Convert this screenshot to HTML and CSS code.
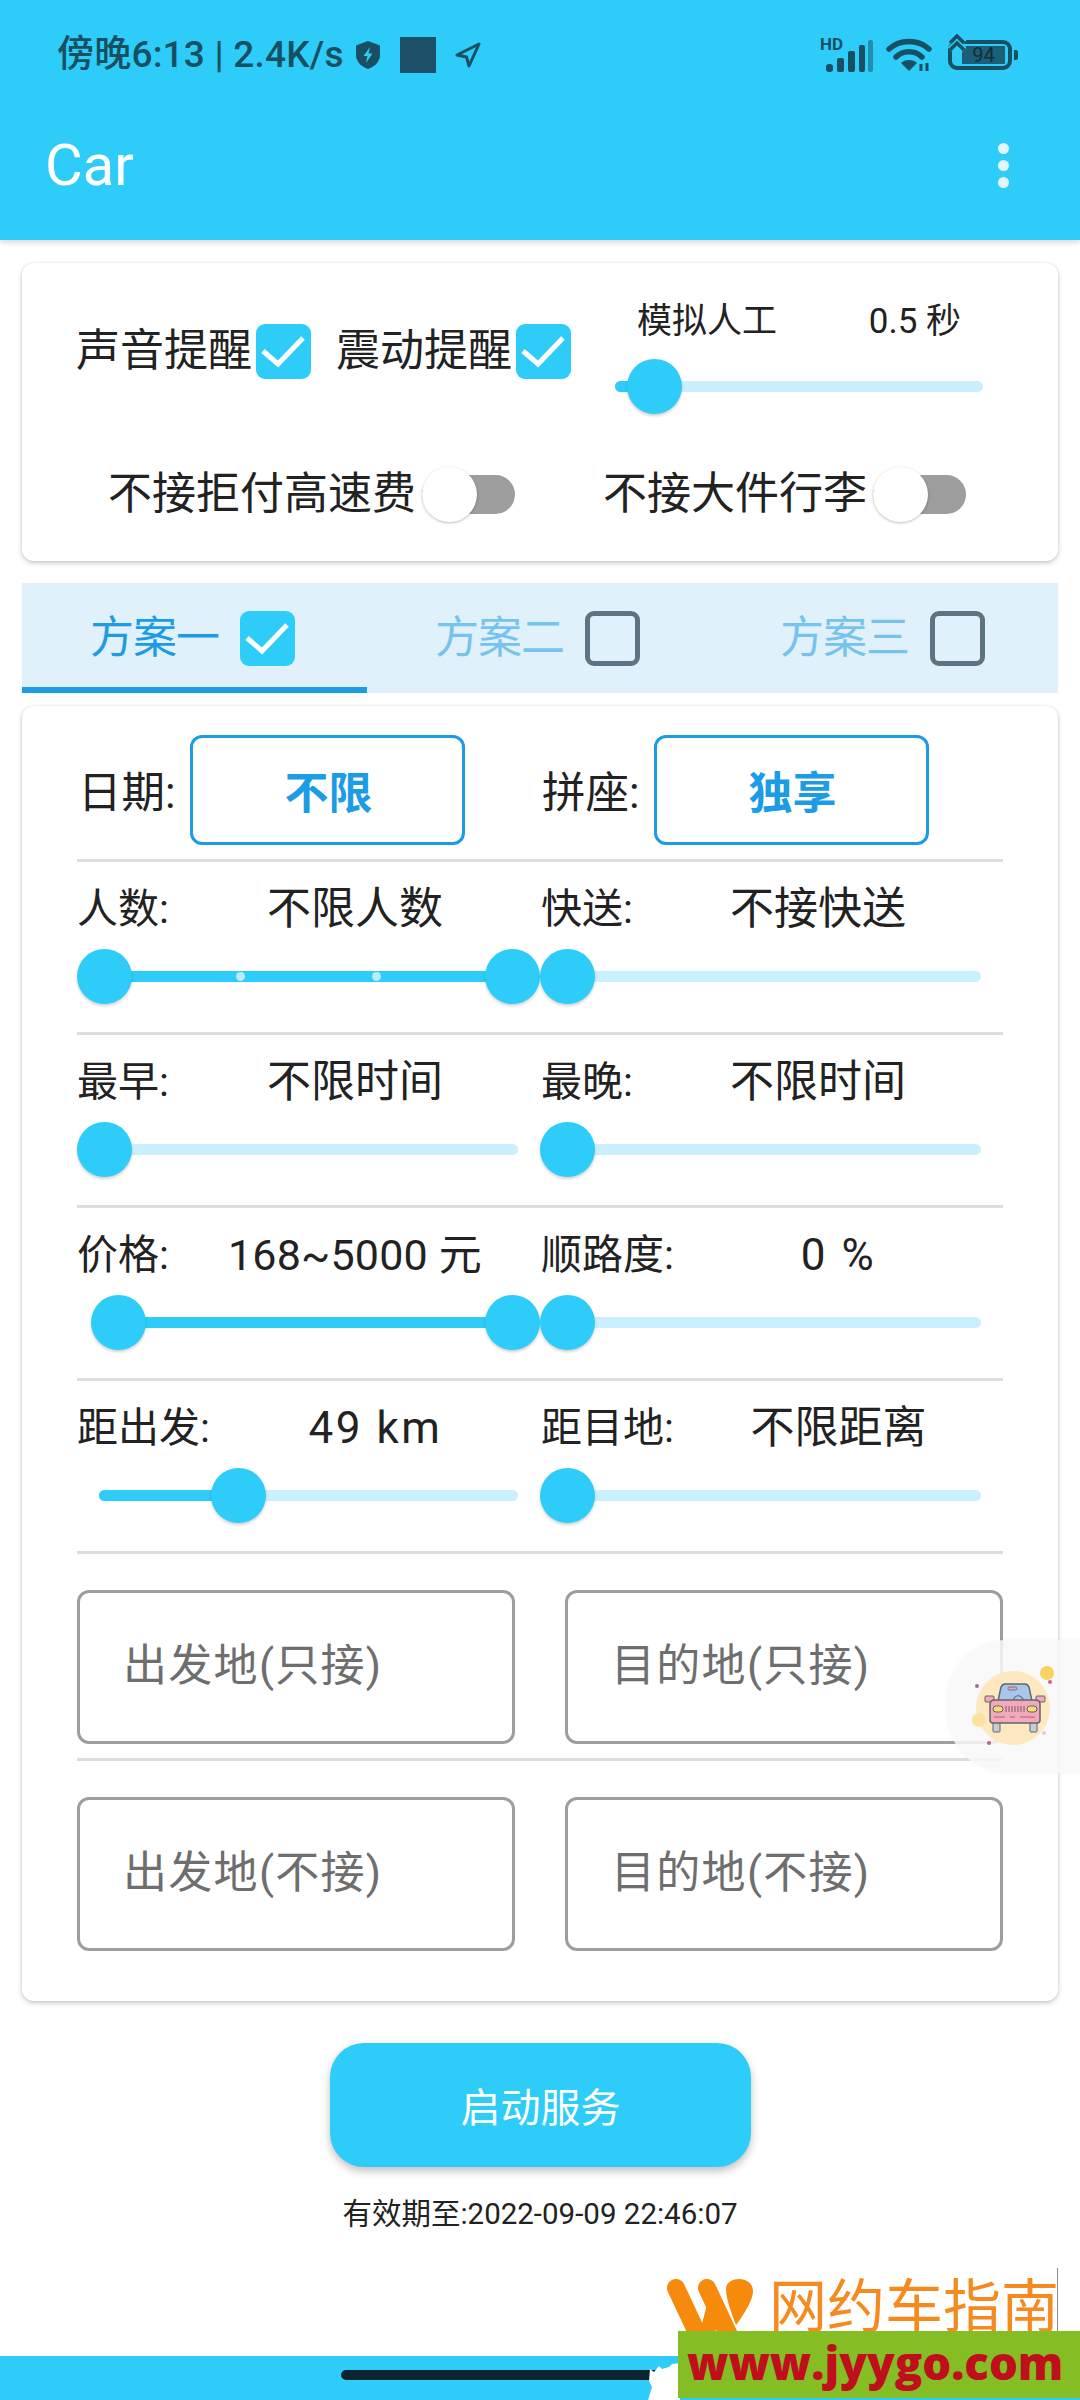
FILE: index.html
```html
<!DOCTYPE html>
<html lang="zh">
<head>
<meta charset="utf-8">
<title>Car</title>
<link rel="stylesheet" href="styles.css">
</head>
<body>
<div class="screen">
  <header class="appbar">
    <div class="status">
      <div class="status-left">
        <span class="status-text">傍晚6:13 | 2.4K/s</span>
        <svg class="ic-shield" viewBox="0 0 26 28"><path d="M13 0 25 4.500V14C25 21 19 26 13 28 7 26 1 21 1 14V4.500Z" fill="#174f63"/><path d="M15 6 8.500 15H12.500L11 22 17.500 12.500H13.500Z" fill="#2ecdf9"/></svg>
        <span class="status-square"></span>
        <svg class="ic-nav" viewBox="0 0 26 26"><path d="M24 2 2 13 11.500 15 14 24Z" fill="none" stroke="#174f63" stroke-width="3" stroke-linejoin="round"/></svg>
      </div>
      <div class="status-right">
        <div class="ic-signal">
          <span class="hd">HD</span>
          <svg viewBox="0 0 48 32" class="bars"><g fill="#174f63"><rect x="1" y="24" width="7" height="8" rx="3"/><rect x="12" y="18" width="7" height="14" rx="2"/><rect x="23" y="11" width="7" height="21" rx="2"/><rect x="34" y="5" width="6" height="27" rx="2"/></g><rect x="43" y="0" width="5" height="32" rx="2" fill="#1f8eaf"/></svg>
        </div>
        <svg class="ic-wifi" viewBox="0 0 46 34"><g fill="none" stroke="#174f63" stroke-linecap="round" stroke-width="5.500"><path d="M3 11C14 1 32 1 43 11"/><path d="M10 19C17 12 29 12 36 19"/></g><path d="M15 25C19 21 27 21 31 25L23 33Z" fill="#174f63"/><path d="M35 26V33M41 25V33" stroke="#174f63" stroke-width="3"/></svg>
        <div class="battery">
          <div class="batt-body"><div class="batt-fill"><span>94</span></div></div>
          <span class="batt-cap"></span>
          <svg class="ic-charge" viewBox="0 0 18 24"><path d="M2 9 9 2 16 9M2 16 9 9 16 16M9 10V24" fill="none" stroke="#2ecdf9" stroke-width="7"/><path d="M2 9 9 2 16 9M2 16 9 9 16 16" fill="none" stroke="#174f63" stroke-width="3.500"/></svg>
        </div>
      </div>
    </div>
    <div class="toolbar">
      <span class="app-title">Car</span>
      <div class="more"><i></i><i></i><i></i></div>
    </div>
  </header>

  <section class="card card-top">
    <div class="top-row">
      <span class="opt">声音提醒</span>
      <span class="check on"><svg viewBox="0 0 55 55"><path d="M7 27 22 40 47 14"/></svg></span>
      <span class="opt opt-second">震动提醒</span>
      <span class="check on"><svg viewBox="0 0 55 55"><path d="M7 27 22 40 47 14"/></svg></span>
      <div class="sim">
        <div class="sim-label"><span>模拟人工</span><span>0.5 秒</span></div>
        <div class="slider sim-slider">
          <div class="track" ><div class="fill" style="width:39px"></div></div>
          <span class="thumb" style="left:12px"></span>
        </div>
      </div>
    </div>
    <div class="switch-row">
      <div class="sw-item sw-a"><span class="opt">不接拒付高速费</span><span class="switch"><i></i></span></div>
      <div class="sw-item sw-b"><span class="opt">不接大件行李</span><span class="switch"><i></i></span></div>
    </div>
  </section>

  <nav class="tabs">
    <div class="tab active"><span class="tab-text">方案一</span><span class="check on"><svg viewBox="0 0 55 55"><path d="M7 27 22 40 47 14"/></svg></span></div>
    <div class="tab"><span class="tab-text">方案二</span><span class="check"></span></div>
    <div class="tab"><span class="tab-text">方案三</span><span class="check"></span></div>
  </nav>

  <section class="card card-main">
    <div class="row date-row">
      <div class="cell date-cell"><span class="date-label">日期:</span><span class="pick">不限</span></div>
      <div class="cell date-cell"><span class="date-label">拼座:</span><span class="pick">独享</span></div>
    </div>

    <div class="row param-row">
      <div class="cell">
        <div class="head"><span class="lab">人数:</span><span class="val">不限人数</span></div>
        <div class="slider">
          <div class="track"><div class="fill full"></div><i class="tick" style="left:141px"></i><i class="tick" style="left:277px"></i></div>
          <span class="thumb" style="left:0"></span><span class="thumb" style="left:408px"></span>
        </div>
      </div>
      <div class="cell">
        <div class="head"><span class="lab">快送:</span><span class="val">不接快送</span></div>
        <div class="slider right"><div class="track"></div><span class="thumb" style="left:0"></span></div>
      </div>
    </div>

    <div class="row param-row">
      <div class="cell">
        <div class="head"><span class="lab">最早:</span><span class="val">不限时间</span></div>
        <div class="slider"><div class="track"></div><span class="thumb" style="left:0"></span></div>
      </div>
      <div class="cell">
        <div class="head"><span class="lab">最晚:</span><span class="val">不限时间</span></div>
        <div class="slider right"><div class="track"></div><span class="thumb" style="left:0"></span></div>
      </div>
    </div>

    <div class="row param-row">
      <div class="cell">
        <div class="head"><span class="lab">价格:</span><span class="val num">168~5000 元</span></div>
        <div class="slider">
          <div class="track"><div class="fill full"></div></div>
          <span class="thumb" style="left:14px"></span><span class="thumb" style="left:408px"></span>
        </div>
      </div>
      <div class="cell">
        <div class="head"><span class="lab">顺路度:</span><span class="val wide">0 %</span></div>
        <div class="slider right"><div class="track"></div><span class="thumb" style="left:0"></span></div>
      </div>
    </div>

    <div class="row param-row">
      <div class="cell">
        <div class="head"><span class="lab">距出发:</span><span class="val wide">49 km</span></div>
        <div class="slider">
          <div class="track"><div class="fill" style="width:139px"></div></div>
          <span class="thumb" style="left:134px"></span>
        </div>
      </div>
      <div class="cell">
        <div class="head"><span class="lab">距目地:</span><span class="val">不限距离</span></div>
        <div class="slider right"><div class="track"></div><span class="thumb" style="left:0"></span></div>
      </div>
    </div>

    <div class="input-row first">
      <div class="field">出发地(只接)</div>
      <div class="field">目的地(只接)</div>
    </div>
    <div class="input-row">
      <div class="field">出发地(不接)</div>
      <div class="field">目的地(不接)</div>
    </div>
  </section>

  <button class="start">启动服务</button>
  <p class="expiry">有效期至:2022-09-09 22:46:07</p>

  <footer class="navbar"><span class="pill"></span></footer>

  <aside class="ball">
    <svg viewBox="0 0 133 133">
      <circle cx="66" cy="68" r="37" fill="#fde8c0"/>
      <circle cx="100" cy="33" r="7" fill="#f7d35f"/>
      <circle cx="103" cy="42" r="2" fill="#d4638a"/>
      <circle cx="30" cy="46" r="2" fill="#b06a96"/>
      <circle cx="32" cy="80" r="7" fill="#fbe2a0"/>
      <circle cx="97" cy="93" r="2" fill="#dcd3c0"/>
      <circle cx="42" cy="103" r="2" fill="#c0607e"/>
      <path d="M51 61 54 47C55 45 56 44 58 44H78C80 44 81 45 82 47L85 61Z" fill="#a9c6ea" stroke="#5f6672" stroke-width="1.500"/>
      <path d="M66 61C68 54 74 54 77 61" fill="none" stroke="#5f6672" stroke-width="1.200"/>
      <rect x="61" y="47" width="9" height="3" rx="1.500" fill="#e8a3b6" stroke="#5f6672" stroke-width=".8"/>
      <rect x="38" y="56" width="9" height="6" rx="1" fill="#f2a9b9" stroke="#5f6672"/>
      <rect x="89" y="56" width="9" height="6" rx="1" fill="#f2a9b9" stroke="#5f6672"/>
      <rect x="46" y="82" width="7" height="10" rx="1" fill="#c6cdd8" stroke="#5f6672"/>
      <rect x="83" y="82" width="7" height="10" rx="1" fill="#c6cdd8" stroke="#5f6672"/>
      <path d="M43 64C43 61 45 60 48 60H88C91 60 93 61 93 64V80C93 82 92 83 90 83H46C44 83 43 82 43 80Z" fill="#f4a9bb" stroke="#5f6672" stroke-width="1.500"/>
      <rect x="46" y="66" width="10" height="6" rx="3" fill="#fbdc6e" stroke="#5f6672"/>
      <rect x="80" y="66" width="10" height="6" rx="3" fill="#fbdc6e" stroke="#5f6672"/>
      <path d="M59 66V72M62 66V72M65 66V72M68 66V72M71 66V72M74 66V72M77 66V72" stroke="#7a5b6a"/>
      <path d="M47 77H58M63 77H68M73 77H88" stroke="#a0667c"/>
    </svg>
  </aside>

  <aside class="watermark">
    <svg class="wm-logo" viewBox="0 0 100 60">
      <g fill="none" stroke="#f58a0c" stroke-width="18" stroke-linecap="round"><path d="M10 9 32 56"/><path d="M41 9 63 56"/></g>
      <path d="M33 56 42 22 56 50Z" fill="#f58a0c"/>
      <path d="M60 10C60 3 67 0 73 0 81 0 87 5 87 12 87 22 76 38 70 46 66 36 60 20 60 10Z" fill="#f58a0c"/>
    </svg>
    <span class="wm-cn">网约车指南</span>
    <span class="wm-rule"></span>
    <svg class="wm-splotch" viewBox="0 0 36 45"><path d="M36 8 28 9 25 12 18 14 15 11 10 17 6 14 5 26 8 32 4 45H36Z" fill="#fff"/></svg>
    <div class="wm-green">www.jyygo.com</div>
  </aside>
</div>
</body>
</html>
```

FILE: styles.css
```css
* { box-sizing: border-box; }
html, body { margin: 0; padding: 0; }
body {
  font-family: Roboto, "Noto Sans CJK SC", sans-serif;
  color: #222;
  background: #fff;
}
.screen {
  position: relative;
  width: 1080px;
  height: 2400px;
  overflow: hidden;
  display: flex;
  flex-direction: column;
  align-items: stretch;
}

/* header */
.appbar {
  height: 240px;
  flex: none;
  background: #2ecdf9;
  box-shadow: 0 2px 6px rgba(0,0,0,.18);
  position: relative;
  z-index: 1;
}
.status {
  height: 110px;
  display: flex;
  justify-content: space-between;
  align-items: center;
  padding: 0 62px 0 57px;
  color: #174f63;
}
.status-left, .status-right { display: flex; align-items: center; }
.status-text { font-size: 37px; font-weight: 500; line-height: 40px; white-space: nowrap; letter-spacing: .2px; }
.ic-shield { width: 26px; height: 28px; margin-left: 11px; }
.status-square { width: 36px; height: 36px; background: #1c5066; margin-left: 19px; }
.ic-nav { width: 26px; height: 26px; margin-left: 19px; }
.ic-signal { position: relative; width: 50px; height: 32px; margin-top: 2px; }
.bars { width: 48px; height: 32px; position: absolute; left: 2px; top: 0; }
.hd { position: absolute; left: -3px; top: -4px; font-size: 17px; line-height: 16px; font-weight: 700; color: #174f63; }
.ic-wifi { width: 46px; height: 34px; margin-left: 13px; }
.battery { position: relative; display: flex; align-items: center; margin-left: 16px; }
.ic-charge { position: absolute; left: 0; top: -6px; width: 18px; height: 24px; }
.batt-body { width: 64px; height: 30px; border: 4px solid #174f63; border-radius: 9px; padding: 2px 3px 2px 10px; }
.batt-fill { height: 100%; width: 100%; background: #1c5e75; display: flex; align-items: center; justify-content: center; }
.batt-fill span { font-size: 20px; line-height: 18px; color: #0c2f3d; }
.batt-cap { width: 4px; height: 10px; background: #174f63; margin-left: 2px; border-radius: 0 2px 2px 0; }
.toolbar {
  height: 110px;
  display: flex;
  justify-content: space-between;
  align-items: center;
  padding: 0 71px 0 45px;
}
.app-title { font-size: 58px; line-height: 70px; color: #fff; }
.more { display: flex; flex-direction: column; gap: 6px; }
.more i { width: 11px; height: 11px; border-radius: 50%; background: #e1f5fd; display: block; }

/* cards */
.card {
  margin: 0 22px;
  background: #fff;
  border-radius: 12px;
  box-shadow: 0 2px 5px rgba(0,0,0,.22), 0 0 2px rgba(0,0,0,.08);
  flex: none;
}
.card-top { margin-top: 23px; height: 298px; }
.top-row { height: 176px; display: flex; align-items: center; padding-left: 54px; }
.opt { font-size: 44px; line-height: 60px; white-space: nowrap; }
.opt-second { margin-left: 25px; }
.opt + .check { margin-left: 4px; }
.check {
  width: 55px;
  height: 55px;
  border-radius: 9px;
  flex: none;
  display: block;
  border: 5px solid #5d7382;
}
.check.on { background: #2ecdf9; border: 0; }
.check svg { display: block; width: 55px; height: 55px; }
.check path { fill: none; stroke: #fff; stroke-width: 5; }
.sim { align-self: flex-start; width: 380px; margin-left: 44px; padding-top: 34px; }
.sim-label {
  display: flex;
  justify-content: space-between;
  font-size: 35px;
  line-height: 50px;
  padding: 0 34px 0 22px;
  margin-bottom: 12px;
}
.switch-row { height: 60px; margin-top: 25px; display: flex; }
.sw-item { display: flex; align-items: center; }
.sw-a { padding-left: 86px; }
.sw-b { margin-left: 88px; }
.switch { position: relative; width: 93px; height: 39px; margin-left: 6px; background: #9e9e9e; border-radius: 20px; }
.switch i {
  position: absolute;
  left: 0;
  top: -8px;
  width: 55px;
  height: 55px;
  border-radius: 50%;
  background: #fff;
  box-shadow: 0 1px 3px rgba(0,0,0,.25);
}

/* tabs */
.tabs {
  margin: 22px 22px 0;
  height: 110px;
  flex: none;
  background: #e1f1fb;
  display: grid;
  grid-template-columns: 345px 345px 346px;
}
.tab {
  display: flex;
  align-items: flex-start;
  padding: 28px 0 0 68px;
  gap: 21px;
  color: #76c4ee;
  border-bottom: 6px solid transparent;
}
.tab.active { color: #1c9ce4; border-bottom-color: #1c9ce4; }
.tab-text { font-size: 44px; line-height: 55px; letter-spacing: -1px; }

/* main card */
.card-main { margin-top: 13px; height: 1295px; padding: 0 55px; }
.row { display: grid; grid-template-columns: 464px 462px; border-bottom: 3px solid #ddd; }
.date-row { height: 156px; padding-top: 29px; }
.date-cell { display: flex; align-items: flex-start; }
.date-label { font-size: 43.500px; line-height: 118px; width: 113px; white-space: nowrap; padding-left: 1px; }
.pick {
  width: 275px;
  height: 110px;
  border: 3px solid #1c9ce4;
  border-radius: 12px;
  color: #1c9ce4;
  font-size: 44px;
  font-weight: 700;
  line-height: 112px;
  text-align: center;
  padding-left: 2px;
}
.param-row { height: 173px; padding-top: 17px; }
.head {
  height: 60px;
  display: flex;
  align-items: center;
  font-size: 44px;
  line-height: 60px;
  white-space: nowrap;
}
.lab { font-size: 41px; }
.val { flex: 1; text-align: center; }
.val.num { font-size: 43px; letter-spacing: .2px; }
.val.wide { letter-spacing: 2.500px; }
.slider { position: relative; height: 55px; margin-top: 10px; display: block; }
.slider.right { margin-left: -1px; }
.track {
  position: absolute;
  left: 22px;
  top: 22px;
  width: 419px;
  height: 11px;
  border-radius: 6px;
  background: #c9f0fc;
}
.slider.right .track { left: 27px; width: 414px; }
.fill { height: 100%; background: #2ecdf9; border-radius: 6px; }
.fill.full { width: 100%; }
.tick {
  position: absolute;
  top: 1px;
  width: 9px;
  height: 9px;
  margin-left: -4px;
  border-radius: 50%;
  background: #b6ecfb;
}
.thumb {
  position: absolute;
  top: 0;
  width: 55px;
  height: 55px;
  border-radius: 50%;
  background: #2ecdf9;
  box-shadow: 0 2px 3px rgba(0,0,0,.18);
}
.sim-slider { margin: 0; }
.sim-slider .track { left: 0; width: 368px; }

.input-row { display: flex; justify-content: space-between; height: 154px; }
.input-row.first { margin-top: 36px; height: 171px; border-bottom: 3px solid #ddd; }
.input-row + .input-row { margin-top: 36px; }
.input-row.first .field { height: 154px; }
.field {
  width: 438px;
  height: 154px;
  border: 3px solid #9e9e9e;
  border-radius: 12px;
  padding-left: 43px;
  font-size: 44px;
  line-height: 146px;
  letter-spacing: 1.300px;
  color: #6e6e6e;
  white-space: nowrap;
}

/* bottom */
.start {
  display: block;
  flex: none;
  width: 421px;
  height: 124px;
  margin: 42px 0 0 330px;
  padding: 0;
  border: 0;
  border-radius: 34px;
  background: #2ecdf9;
  color: #fff;
  font-family: inherit;
  font-size: 40px;
  box-shadow: 0 4px 8px rgba(0,0,0,.25);
}
.expiry {
  margin: 27px 0 0;
  font-size: 29.500px;
  line-height: 40px;
  text-align: center;
  color: #222;
}
.navbar { margin-top: auto; height: 44px; flex: none; background: #2ecdf9; padding: 14px 0 0 341px; }
.pill { display: block; width: 320px; height: 10px; border-radius: 5px; background: #0a2530; }

/* floating ball */
.ball {
  position: absolute;
  left: 947px;
  top: 1640px;
  width: 133px;
  height: 133px;
  border-radius: 60px 0 0 60px;
  background: rgba(248,248,248,.86);
  box-shadow: 0 0 4px rgba(0,0,0,.04);
}
.ball svg { display: block; width: 133px; height: 133px; }

/* watermark */
.watermark { position: absolute; left: 644px; top: 2268px; width: 436px; height: 132px; }
.wm-logo { position: absolute; left: 22px; top: 11px; width: 100px; height: 60px; }
.wm-cn {
  position: absolute;
  left: 125px;
  top: 4px;
  font-size: 58px;
  line-height: 70px;
  color: #f58a1f;
  white-space: nowrap;
}
.wm-rule { position: absolute; left: 413px; top: 0; width: 1px; height: 72px; background: #8a8a8a; }
.wm-splotch { position: absolute; left: 0; top: 87px; width: 36px; height: 45px; }
.wm-green {
  position: absolute;
  left: 34px;
  top: 63px;
  width: 402px;
  height: 67px;
  background: #85bd25;
  color: #bf0f1c;
  font-family: "Open Sans", sans-serif;
  font-weight: 800;
  font-size: 45.500px;
  line-height: 62px;
  padding-left: 9px;
  white-space: nowrap;
}
```
